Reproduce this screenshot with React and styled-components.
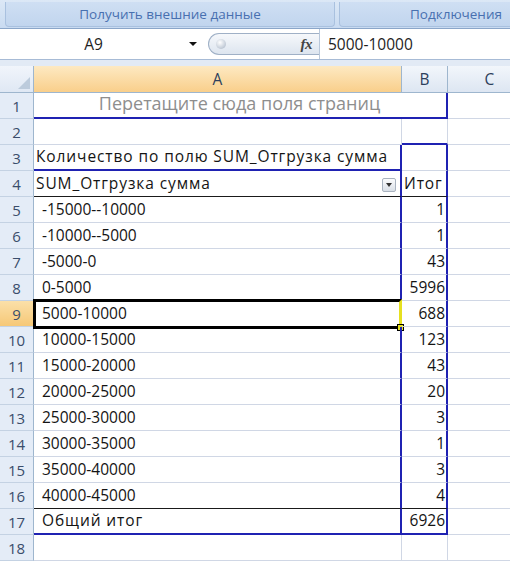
import React from 'react'
import styled, { createGlobalStyle } from 'styled-components'

const GRID = '#d0d7e5'
const HEAD_LINE = '#9eb6ce'
const PIVOT = '2px solid #1f22b2'
const TOTAL = '1px solid #1a1a1a'

const GlobalStyle = createGlobalStyle`
  html, body { margin: 0; padding: 0; background: #fff; overflow: hidden; }
  body { font-family: "Open Sans", "Noto Sans", sans-serif; }
`

const Window = styled.div`
  width: 510px;
  height: 561px;
  overflow: hidden;
  display: flex;
  flex-direction: column;
  background: #fff;
`

// ribbon group captions
const Ribbon = styled.div`
  height: 28px;
  flex-shrink: 0;
  display: flex;
  gap: 4px;
  padding-left: 5px;
  background: linear-gradient(#dce8f6, #c9dbf1);
  border-bottom: 1px solid #8ba6c9;
  overflow: hidden;
`
const GroupCaption = styled.div`
  flex-shrink: 0;
  width: ${p => p.$width}px;
  height: 24px;
  margin-top: 2px;
  display: flex;
  align-items: center;
  justify-content: center;
  background: linear-gradient(#cfdff3, #c1d5ee);
  border: 1px solid #a9c1df;
  border-top: none;
  border-radius: 0 0 4px 4px;
  color: #4870b0;
  font-size: 13.5px;
`

// name box + formula line
const FormulaBar = styled.div`
  height: 30px;
  flex-shrink: 0;
  display: flex;
  align-items: center;
  background: #fff;
  border-bottom: 1px solid #a7bbd6;
`
const NameBox = styled.div`
  width: 206px;
  height: 100%;
  display: flex;
  align-items: center;
  padding-right: 9px;
  box-sizing: border-box;
`
const NameText = styled.span`
  flex: 1;
  text-align: center;
  font-size: 15.5px;
  color: #1e1e1e;
  padding-right: 2px;
`
const DropArrow = styled.span`
  width: 0;
  height: 0;
  border-left: 4px solid transparent;
  border-right: 4px solid transparent;
  border-top: 4px solid #111;
`
const FxPill = styled.div`
  width: 111px;
  height: 22px;
  margin-left: 2px;
  box-sizing: border-box;
  display: flex;
  align-items: center;
  justify-content: space-between;
  padding: 0 7px 0 7px;
  border: 1px solid #9fb0c6;
  border-right: none;
  border-radius: 12px 0 0 12px;
  background: linear-gradient(#f6f8fb, #dde5ef);
`
const Knob = styled.span`
  width: 10px;
  height: 10px;
  border-radius: 50%;
  background: radial-gradient(circle at 40% 35%, #ffffff, #c9d1dc 60%, #a3afbf);
`
const Fx = styled.span`
  font-family: "Liberation Serif", serif;
  font-style: italic;
  font-weight: bold;
  font-size: 15px;
  color: #444;
  letter-spacing: -0.5px;
`
const FormulaInput = styled.div`
  flex: 1;
  height: 100%;
  display: flex;
  align-items: center;
  padding-left: 8px;
  border-left: 1px solid #b8c7da;
  font-size: 15.5px;
  color: #1e1e1e;
`
const Spacer = styled.div`
  height: 6px;
  flex-shrink: 0;
  background: #e2eaf5;
`

// worksheet grid
const Sheet = styled.div`
  display: grid;
  grid-template-columns: 34px 368px 46px 84px;
  grid-template-rows: 27px;
  grid-auto-rows: 26px;
  font-size: 15.5px;
`
const Corner = styled.div`
  position: relative;
  background: linear-gradient(#f1f5fb, #dfe8f4);
  border-right: 1px solid ${HEAD_LINE};
  border-bottom: 1px solid ${HEAD_LINE};
  &::after {
    content: '';
    position: absolute;
    right: 3px;
    bottom: 3px;
    width: 12px;
    height: 12px;
    background: #bccbdc;
    clip-path: polygon(100% 0, 100% 100%, 0 100%);
  }
`
const ColHead = styled.div`
  display: flex;
  align-items: center;
  justify-content: center;
  color: #2d3f5c;
  background: ${p => (p.$active ? 'linear-gradient(#fde9c2, #f9cf8b)' : 'linear-gradient(#f2f6fb, #dde6f2)')};
  border-right: 1px solid ${HEAD_LINE};
  border-bottom: 1px solid ${HEAD_LINE};
`
const RowHead = styled.div`
  display: flex;
  align-items: flex-end;
  justify-content: center;
  padding-bottom: 2px;
  box-sizing: border-box;
  font-size: 15px;
  color: #3a4d6b;
  background: ${p => (p.$active ? 'linear-gradient(#fbe0a9, #f6c877)' : '#e4ecf7')};
  border-right: 1px solid ${HEAD_LINE};
  border-bottom: 1px solid #c4d2e3;
`
const Cell = styled.div`
  position: relative;
  display: flex;
  align-items: flex-end;
  justify-content: ${p => (p.$align === 'right' ? 'flex-end' : p.$align === 'center' ? 'center' : 'flex-start')};
  grid-column: ${p => (p.$span ? `span ${p.$span}` : 'auto')};
  box-sizing: border-box;
  padding: 0 ${p => (p.$align === 'right' ? 1 : 3)}px 2px ${p => p.$indent ?? 2}px;
  color: ${p => (p.$muted ? '#8e8e8e' : '#141414')};
  font-size: ${p => (p.$muted ? '18px' : '15.5px')};
  letter-spacing: ${p => (p.$label ? '0.9px' : 'normal')};
  white-space: nowrap;
  border-right: ${p => p.$right || `1px solid ${GRID}`};
  border-bottom: ${p => p.$bottom || `1px solid ${GRID}`};
`
const Selection = styled.span`
  position: absolute;
  left: -1px;
  top: -2px;
  right: -2px;
  bottom: -3px;
  border: 3px solid #000;
  border-right-color: #e6e020;
  pointer-events: none;
`
const FillHandle = styled.span`
  position: absolute;
  right: -4px;
  bottom: -5px;
  width: 5px;
  height: 5px;
  background: #e6e020;
  border: 1px solid #000;
`
const FilterButton = styled.span`
  position: absolute;
  right: 4px;
  top: 7px;
  width: 14px;
  height: 14px;
  box-sizing: border-box;
  display: flex;
  align-items: center;
  justify-content: center;
  border: 1px solid #a9b3c0;
  border-radius: 2px;
  background: linear-gradient(#fbfcfd, #d9dfe7);
  &::after {
    content: '';
    border-left: 3.5px solid transparent;
    border-right: 3.5px solid transparent;
    border-top: 4px solid #333;
  }
`

const ranges = [
  ['-15000--10000', 1],
  ['-10000--5000', 1],
  ['-5000-0', 43],
  ['0-5000', 5996],
  ['5000-10000', 688],
  ['10000-15000', 123],
  ['15000-20000', 43],
  ['20000-25000', 20],
  ['25000-30000', 3],
  ['30000-35000', 1],
  ['35000-40000', 3],
  ['40000-45000', 4],
]

export default function App() {
  const total = ranges.reduce((s, r) => s + r[1], 0)

  return (
    <Window>
      <GlobalStyle />
      <Ribbon>
        <GroupCaption $width={328}>Получить внешние данные</GroupCaption>
        <GroupCaption $width={232}>Подключения</GroupCaption>
      </Ribbon>
      <FormulaBar>
        <NameBox>
          <NameText>A9</NameText>
          <DropArrow />
        </NameBox>
        <FxPill>
          <Knob />
          <Fx>fx</Fx>
        </FxPill>
        <FormulaInput>5000-10000</FormulaInput>
      </FormulaBar>
      <Spacer />
      <Sheet>
        <Corner />
        <ColHead $active>A</ColHead>
        <ColHead>B</ColHead>
        <ColHead>C</ColHead>

        <RowHead>1</RowHead>
        <Cell $span={2} $align="center" $muted $right={PIVOT} $bottom={PIVOT}>Перетащите сюда поля страниц</Cell>
        <Cell />

        <RowHead>2</RowHead>
        <Cell />
        <Cell $bottom={PIVOT} />
        <Cell />

        <RowHead>3</RowHead>
        <Cell $label $right={PIVOT} $bottom={PIVOT}>Количество по полю SUM_Отгрузка сумма</Cell>
        <Cell $right={PIVOT} />
        <Cell />

        <RowHead>4</RowHead>
        <Cell $label $right={PIVOT} $bottom={TOTAL}>
          SUM_Отгрузка сумма
          <FilterButton />
        </Cell>
        <Cell $label $right={PIVOT} $bottom={TOTAL}>Итог</Cell>
        <Cell />

        {ranges.map(([label, count], i) => {
          const row = i + 5
          const selected = row === 9
          const edge = row === 16 ? TOTAL : undefined
          return (
            <React.Fragment key={row}>
              <RowHead $active={selected}>{row}</RowHead>
              <Cell $indent={8} $right={PIVOT} $bottom={edge}>
                {label}
                {selected && (
                  <>
                    <Selection />
                    <FillHandle />
                  </>
                )}
              </Cell>
              <Cell $align="right" $right={PIVOT} $bottom={edge}>{count}</Cell>
              <Cell />
            </React.Fragment>
          )
        })}

        <RowHead>17</RowHead>
        <Cell $label $indent={8} $right={PIVOT} $bottom={PIVOT}>Общий итог</Cell>
        <Cell $align="right" $right={PIVOT} $bottom={PIVOT}>{total}</Cell>
        <Cell />

        <RowHead>18</RowHead>
        <Cell />
        <Cell />
        <Cell />
      </Sheet>
    </Window>
  )
}
